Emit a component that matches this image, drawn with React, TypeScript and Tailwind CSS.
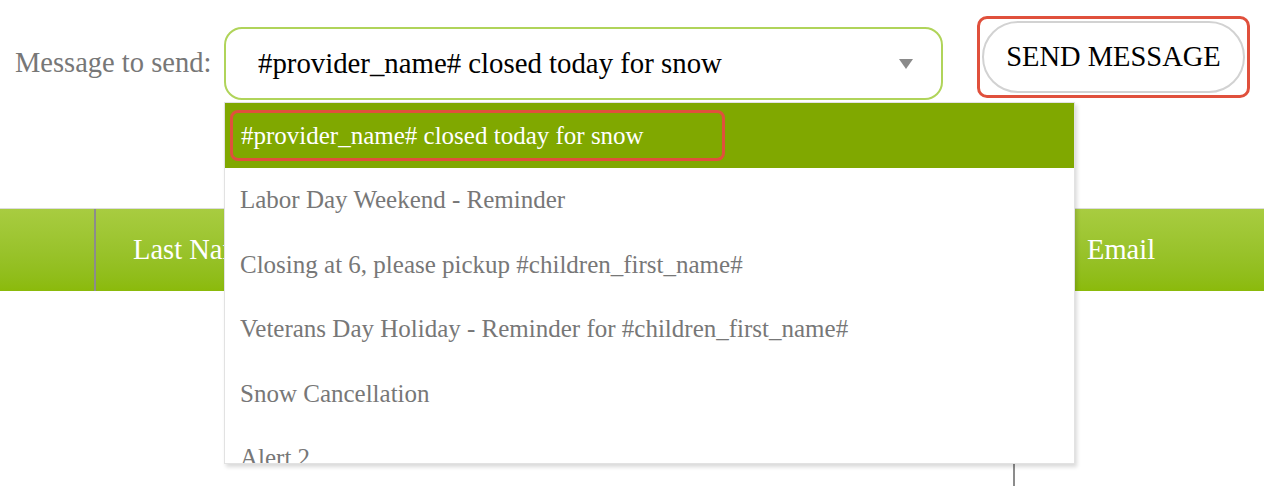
const options = [
  "#provider_name# closed today for snow",
  "Labor Day Weekend - Reminder",
  "Closing at 6, please pickup #children_first_name#",
  "Veterans Day Holiday - Reminder for #children_first_name#",
  "Snow Cancellation",
  "Alert 2",
];

export default function App() {
  return (
    <div className="relative h-[486px] w-full overflow-hidden bg-white font-[family-name:'Liberation_Serif',serif]">
      {/* top bar */}
      <div className="flex items-start pt-[16px]">
        <div className="mt-[11px] flex items-center">
          <span className="ml-[15px] w-[209px] text-[28.5px] text-[#777]">Message to send:</span>
          <div className="flex h-[73px] w-[719px] items-center justify-between rounded-[18px] border-2 border-[#b0d45a] pl-[32px] pr-[28px]">
            <span className="text-[28.8px] text-black">#provider_name# closed today for snow</span>
            <svg width="14" height="10" viewBox="0 0 14 10">
              <path d="M0 0 H14 L7 10 Z" fill="#8a8a8a" />
            </svg>
          </div>
        </div>
        <div className="ml-[34px] flex h-[82px] w-[273px] items-center justify-center rounded-[10px] border-[3px] border-[#e0503c]">
          <button className="flex h-[72px] w-[263px] items-center justify-center rounded-full border-2 border-[#d2d2d2] bg-white text-[28.5px] text-black">
            SEND MESSAGE
          </button>
        </div>
      </div>

      {/* table */}
      <div className="mt-[108px]">
        <div className="flex h-[83px] border-t border-[#dcdcdc] bg-gradient-to-b from-[#a8cc40] to-[#8bba0a] text-[28.5px] text-white">
          <div className="w-[96px] border-r-2 border-[#8c8c8c]" />
          <div className="flex flex-1 items-center pl-[37px]">Last Name</div>
          <div className="flex w-[189px] items-center pl-[12px]">Email</div>
        </div>
        <div className="flex">
          <div className="w-[1013px]" />
          <div className="h-[200px] border-l-2 border-[#8c8c8c]" />
        </div>
      </div>

      {/* open dropdown */}
      <div className="absolute left-[224px] top-[102px] h-[362px] w-[851px] overflow-hidden border border-[#e2e2e2] bg-white shadow-[2px_3px_4px_rgba(0,0,0,0.15)]">
        {options.map((o, i) =>
          i === 0 ? (
            <div key={o} className="flex h-[64.5px] items-center bg-[#80a800] pl-[5px] text-[25px] text-white">
              <span className="flex h-[51px] w-[495px] items-center rounded-[8px] border-[3px] border-[#e0503c] pl-[8px]">
                {o}
              </span>
            </div>
          ) : (
            <div key={o} className="flex h-[64.5px] items-center pl-[15px] text-[25px] text-[#777]">
              {o}
            </div>
          )
        )}
      </div>
    </div>
  );
}
